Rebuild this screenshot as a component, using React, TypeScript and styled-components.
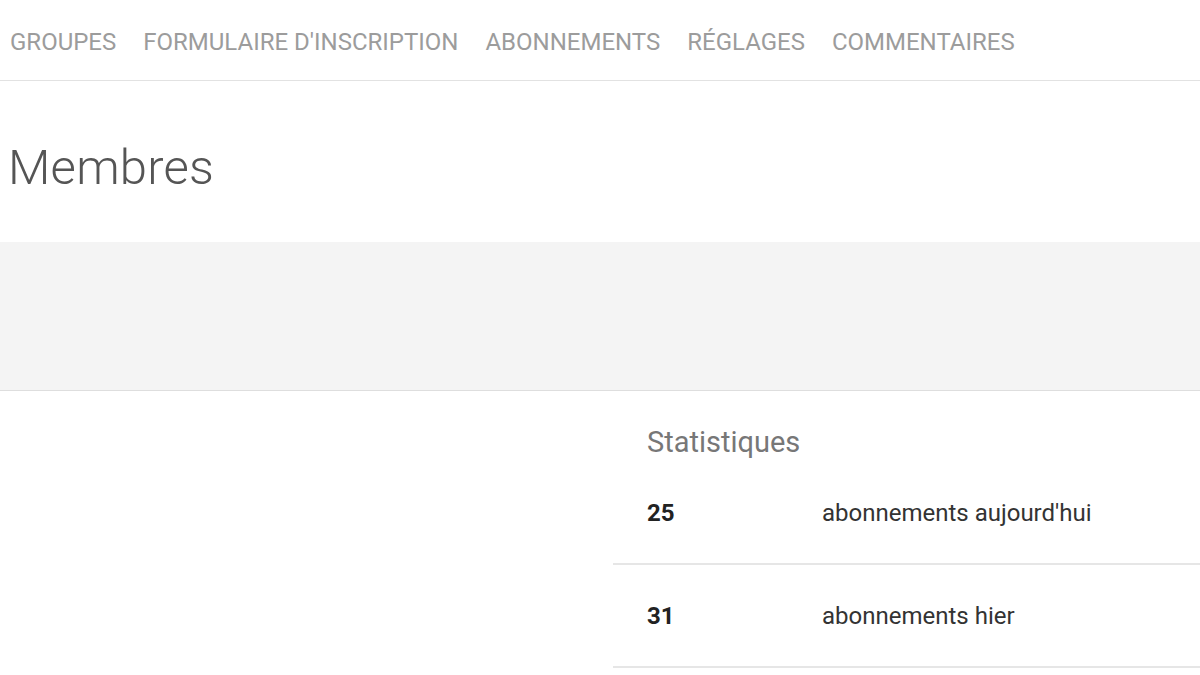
import React, { FC } from 'react';
import styled, { createGlobalStyle } from 'styled-components';

const GlobalStyle = createGlobalStyle`
  body {
    margin: 0;
    background: #fff;
    font-family: Roboto, "Liberation Sans", sans-serif;
  }
`;

const Page = styled.div`
  width: 1200px;
  overflow: hidden;
`;

const NavBar = styled.nav`
  height: 80px;
  display: flex;
  align-items: center;
  gap: 27px;
  padding: 0 0 0 10px;
  border-bottom: 1px solid #e2e2e2;
`;

const NavItem = styled.a`
  font-size: 24px;
  color: #9c9c9c;
  text-transform: uppercase;
  text-decoration: none;
  line-height: 1;
  margin-top: 3px;
  white-space: nowrap;
`;

const TitleArea = styled.header`
  height: 161px;
  display: flex;
  align-items: center;
  padding-left: 8px;
`;

const Title = styled.h1`
  margin: 12px 0 0;
  font-size: 49px;
  font-weight: 300;
  color: #555;
  letter-spacing: 0.2px;
`;

const Band = styled.div`
  height: 148px;
  background: #f4f4f4;
  border-bottom: 1px solid #dedede;
`;

const Content = styled.section`
  display: grid;
  grid-template-columns: 613px 1fr;
`;

const Stats = styled.div`
  display: flex;
  flex-direction: column;
`;

const StatsHeading = styled.h2`
  margin: 0;
  height: 71px;
  box-sizing: border-box;
  padding: 37px 0 0 34px;
  font-size: 29px;
  font-weight: 400;
  color: #777;
  line-height: 1;
`;

const StatRow = styled.div`
  height: 103px;
  box-sizing: border-box;
  display: grid;
  grid-template-columns: 175px 1fr;
  align-items: center;
  padding-left: 34px;
  border-bottom: 2px solid #e6e6e6;
`;

const StatValue = styled.span`
  font-size: 24px;
  font-weight: 700;
  color: #222;
`;

const StatLabel = styled.span`
  font-size: 24px;
  color: #333;
`;

const navItems = ['Groupes', "Formulaire d'inscription", 'Abonnements', 'Réglages', 'Commentaires'];

const stats = [
  { value: 25, label: "abonnements aujourd'hui" },
  { value: 31, label: 'abonnements hier' },
];

const App: FC = () => {
  return (
    <Page>
      <GlobalStyle />
      <NavBar>
        {navItems.map((item) => (
          <NavItem key={item}>{item}</NavItem>
        ))}
      </NavBar>
      <TitleArea>
        <Title>Membres</Title>
      </TitleArea>
      <Band />
      <Content>
        <div />
        <Stats>
          <StatsHeading>Statistiques</StatsHeading>
          {stats.map((s) => (
            <StatRow key={s.label}>
              <StatValue>{s.value}</StatValue>
              <StatLabel>{s.label}</StatLabel>
            </StatRow>
          ))}
        </Stats>
      </Content>
    </Page>
  );
};

export default App;
